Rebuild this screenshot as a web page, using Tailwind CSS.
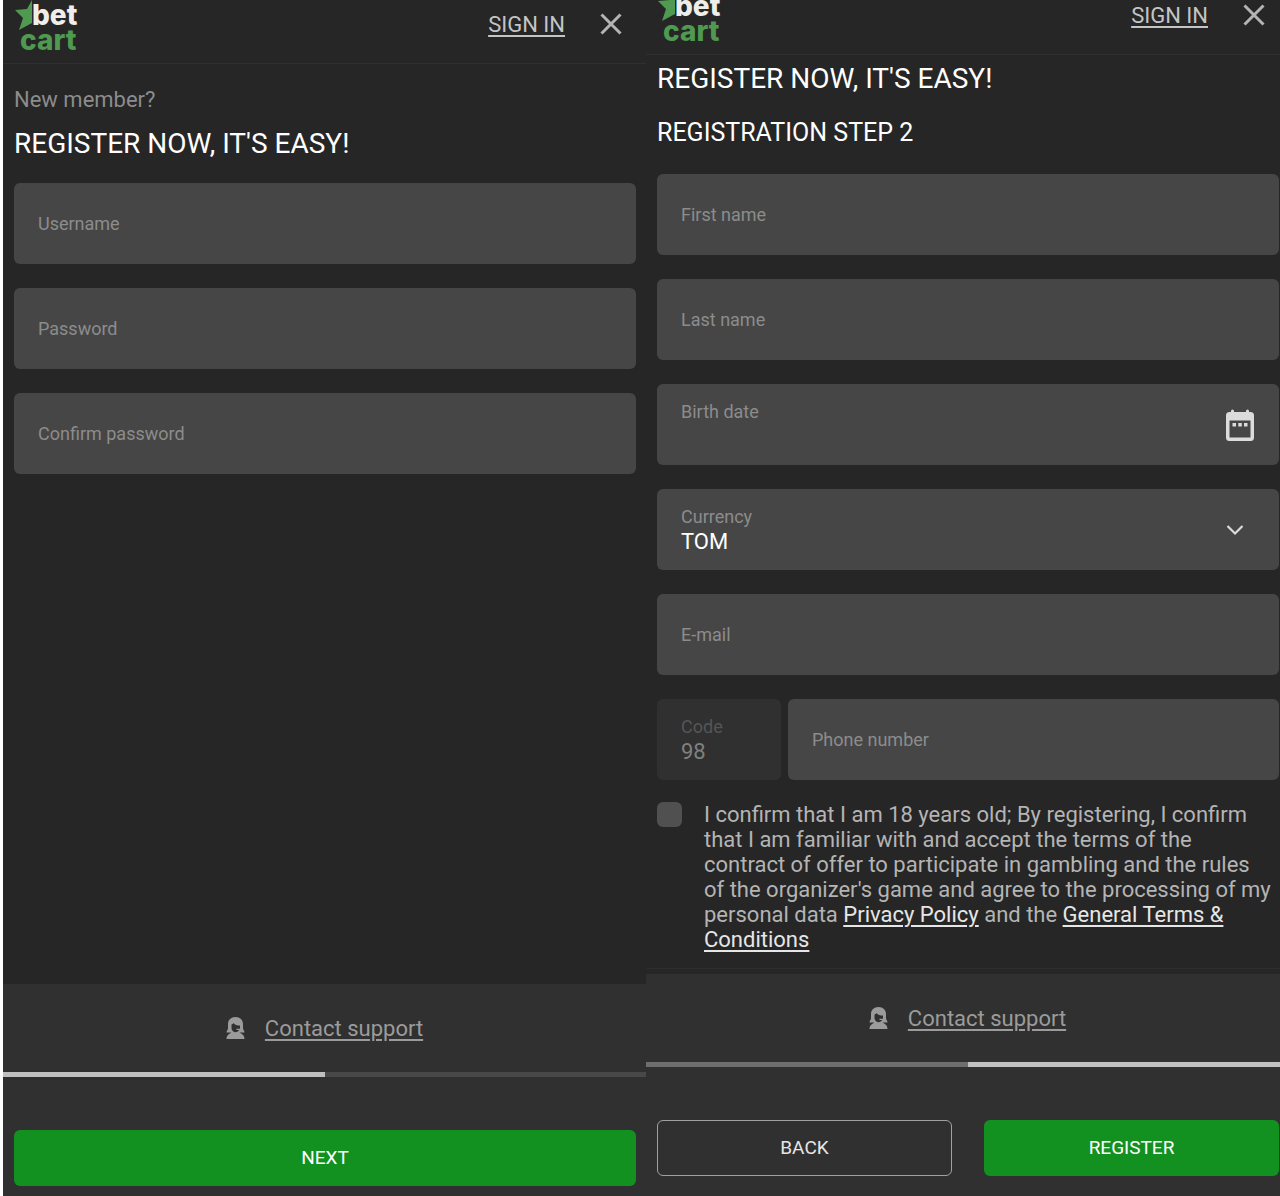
<!DOCTYPE html>
<html lang="en">
<head>
<meta charset="utf-8">
<meta name="viewport" content="width=device-width, initial-scale=1">
<title>Betcart registration</title>
<script src="https://cdn.jsdelivr.net/npm/@tailwindcss/browser@4"></script>
</head>
<body class="bg-[#262626] font-['Roboto',sans-serif] text-white">
<svg class="hidden" aria-hidden="true">
  <symbol id="star" viewBox="0 0 18 30"><path d="M17 0 L12 9 L0 10 L8 18 L4 30 L17 23 Z" fill="#4f9a50"/></symbol>
  <symbol id="close" viewBox="0 0 24 24"><path d="M2.500 2.500 L21.500 21.500 M21.500 2.500 L2.500 21.500" stroke="#b4b4b4" stroke-width="3" fill="none"/></symbol>
  <symbol id="agent" viewBox="0 0 20 22"><path fill="#9b9b9b" fill-rule="evenodd" d="M9.500 0 C14 0 17 3 17 7 V11 C17 13 18.500 13.500 18.500 15.500 H13.500 C16.500 17 18.500 18.500 18.500 22 H0.500 C0.500 18.500 3 17 5.500 15.500 H0.500 C0.500 13.500 2 13 2 11 V7 C2 3 5 0 9.500 0 Z M5.500 7.500 V11 C5.500 13.500 7.500 15.200 9.500 15.200 C11.200 15.200 12.600 14.200 13.300 13 H10.500 V11.800 H14 V8.500 C11 8.500 9 8 7.500 6 C7 7 6.200 7.400 5.500 7.500 Z"/></symbol>
</svg>
<main class="flex min-h-screen border-l-3 border-white">

  <form class="flex flex-[643] min-w-0 flex-col">
    <header class="flex h-16 items-start border-b border-[#303030] pr-[23px] pl-3">
      <div class="relative h-14 w-16 font-['Inter',sans-serif] text-[28px] leading-[30px] font-extrabold" aria-label="Bet cart">
        <svg class="absolute top-0 left-0 h-[30px] w-[18px]"><use href="#star"/></svg>
        <span class="absolute top-0 left-[17px] text-[#f0eeea]">bet</span>
        <span class="absolute top-[25px] left-[5px] text-[#4f9a50]">cart</span>
      </div>
      <nav class="ml-auto flex h-12 items-center gap-[34px]">
        <a href="#" class="text-[22px] text-[#c4c4c4] underline underline-offset-3">SIGN IN</a>
        <button type="button" aria-label="Close"><svg class="size-6"><use href="#close"/></svg></button>
      </nav>
    </header>
    <div class="flex-1 pt-5 pr-2.5 pl-[11px]">
      <p class="text-[22px] leading-8 text-[#8c8c8c]">New member?</p>
      <h1 class="mt-2.5 text-[28px] leading-9">REGISTER NOW, IT'S EASY!</h1>
      <div class="mt-[21px] flex flex-col gap-6">
        <input aria-label="Username" placeholder="Username" class="h-[81px] w-full rounded-md bg-[#464646] px-6 text-lg placeholder:text-[#8c8c8c]">
        <input type="password" aria-label="Password" placeholder="Password" class="h-[81px] w-full rounded-md bg-[#464646] px-6 text-lg placeholder:text-[#8c8c8c]">
        <input type="password" aria-label="Confirm password" placeholder="Confirm password" class="h-[81px] w-full rounded-md bg-[#464646] px-6 text-lg placeholder:text-[#8c8c8c]">
      </div>
    </div>
    <footer class="bg-[#303030]">
      <div class="flex h-[88px] items-center justify-center gap-[19px]">
        <svg class="h-[22px] w-5"><use href="#agent"/></svg>
        <a href="#" class="text-[22px] text-[#9b9b9b] underline underline-offset-3">Contact support</a>
      </div>
      <div class="h-[5px] bg-[#484848]"><div class="h-full w-1/2 bg-[#c0c0c0]"></div></div>
      <div class="pt-[53px] pr-2.5 pb-2.5 pl-[11px]">
        <button class="h-14 w-full rounded-md bg-[#129121] text-[19px]">NEXT</button>
      </div>
    </footer>
  </form>

  <form class="flex flex-[634] min-w-0 flex-col">
    <header class="flex h-[55px] items-start border-b border-[#303030] pr-3.5 pl-3">
      <div class="relative -mt-[9px] h-14 w-16 font-['Inter',sans-serif] text-[28px] leading-[30px] font-extrabold" aria-label="Bet cart">
        <svg class="absolute top-0 left-0 h-[30px] w-[18px]"><use href="#star"/></svg>
        <span class="absolute top-0 left-[17px] text-[#f0eeea]">bet</span>
        <span class="absolute top-[25px] left-[5px] text-[#4f9a50]">cart</span>
      </div>
      <nav class="-mt-[9px] ml-auto flex h-12 items-center gap-[34px]">
        <a href="#" class="text-[22px] text-[#c4c4c4] underline underline-offset-3">SIGN IN</a>
        <button type="button" aria-label="Close"><svg class="size-6"><use href="#close"/></svg></button>
      </nav>
    </header>
    <div class="flex-1 border-b border-[#2e2e2e] pt-1.5 pr-px pl-[11px]">
      <h1 class="text-[28px] leading-9">REGISTER NOW, IT'S EASY!</h1>
      <h2 class="mt-5 text-[25px] leading-8">REGISTRATION STEP 2</h2>
      <div class="mt-[25px] flex flex-col gap-6">
        <input aria-label="First name" placeholder="First name" class="h-[81px] w-full rounded-md bg-[#464646] px-6 text-lg placeholder:text-[#8c8c8c]">
        <input aria-label="Last name" placeholder="Last name" class="h-[81px] w-full rounded-md bg-[#464646] px-6 text-lg placeholder:text-[#8c8c8c]">
        <div class="flex h-[81px] items-center rounded-md bg-[#464646] pr-6 pl-6">
          <div class="flex min-w-0 flex-1 flex-col">
            <label for="birth" class="text-lg leading-6 text-[#8c8c8c]">Birth date</label>
            <input id="birth" class="h-[26px] w-full text-[22px] outline-none">
          </div>
          <button type="button" aria-label="Open calendar">
            <svg class="h-8 w-[30px]" viewBox="0 0 30 32"><path fill="#dcdcdc" fill-rule="evenodd" d="M6 2 Q6 0.500 7.500 0.500 Q9 0.500 9 2 V3 H21 V2 Q21 0.500 22.500 0.500 Q24 0.500 24 2 V3 H25.500 Q29 3 29 6.500 V28.500 Q29 32 25.500 32 H4.500 Q1 32 1 28.500 V6.500 Q1 3 4.500 3 H6 Z M4.500 11.500 V28.500 H25.500 V11.500 Z"/><path fill="#dcdcdc" d="M7.500 14 h3.500 v3.500 h-3.500z M13.300 14 h3.500 v3.500 h-3.500z M19 14 h3.500 v3.500 h-3.500z"/></svg>
          </button>
        </div>
        <div class="flex h-[81px] items-center rounded-md bg-[#464646] pr-[35px] pl-6">
          <div class="flex min-w-0 flex-1 flex-col">
            <label for="currency" class="text-lg leading-6 text-[#8c8c8c]">Currency</label>
            <select id="currency" class="h-[26px] w-full appearance-none bg-transparent text-[22px] leading-[26px] outline-none"><option>TOM</option></select>
          </div>
          <svg class="h-3 w-[18px]" viewBox="0 0 18 12" aria-hidden="true"><path d="M1.500 2 L9 9.500 L16.500 2" fill="none" stroke="#dcdcdc" stroke-width="2.200"/></svg>
        </div>
        <input type="email" aria-label="E-mail" placeholder="E-mail" class="h-[81px] w-full rounded-md bg-[#464646] px-6 text-lg placeholder:text-[#8c8c8c]">
        <div class="flex gap-[7px]">
          <div class="flex h-[81px] w-31 shrink-0 flex-col justify-center rounded-md bg-[#303030] px-6">
            <label for="code" class="text-lg leading-6 text-[#555555]">Code</label>
            <input id="code" value="98" disabled class="h-[26px] w-full text-[22px] text-[#808080]">
          </div>
          <input type="tel" aria-label="Phone number" placeholder="Phone number" class="h-[81px] min-w-0 flex-1 rounded-md bg-[#464646] px-6 text-lg placeholder:text-[#8c8c8c]">
        </div>
      </div>
      <div class="mt-[22px] flex items-start gap-[22px] pr-1">
        <input id="terms" type="checkbox" class="size-[25px] shrink-0 appearance-none rounded-md bg-[#505050]">
        <label for="terms" class="text-[22px] leading-[25px] text-[#b4b4b4]">I confirm that I am 18 years old; By registering, I confirm that I am familiar with and accept the terms of the contract of offer to participate in gambling and the rules of the organizer's game and agree to the processing of my personal data <a href="#" class="text-[#e6e6e6] underline underline-offset-3">Privacy Policy</a> and the <a href="#" class="text-[#e6e6e6] underline underline-offset-3">General Terms &amp; Conditions</a></label>
      </div>
    </div>
    <footer class="mt-[5px] bg-[#303030]">
      <div class="flex h-[88px] items-center justify-center gap-[19px] pl-[9px]">
        <svg class="h-[22px] w-5"><use href="#agent"/></svg>
        <a href="#" class="text-[22px] text-[#9b9b9b] underline underline-offset-3">Contact support</a>
      </div>
      <div class="h-[5px] bg-[#6e6e6e]"><div class="ml-auto h-full w-[49.2%] bg-[#c0c0c0]"></div></div>
      <div class="grid grid-cols-2 gap-8 pt-[53px] pr-px pb-5 pl-[11px]">
        <button type="button" class="h-14 rounded-md border border-[#a0a0a0] text-[19px] text-[#e6e6e6]">BACK</button>
        <button class="h-14 rounded-md bg-[#129121] text-[19px]">REGISTER</button>
      </div>
    </footer>
  </form>
</main>
</body>
</html>
